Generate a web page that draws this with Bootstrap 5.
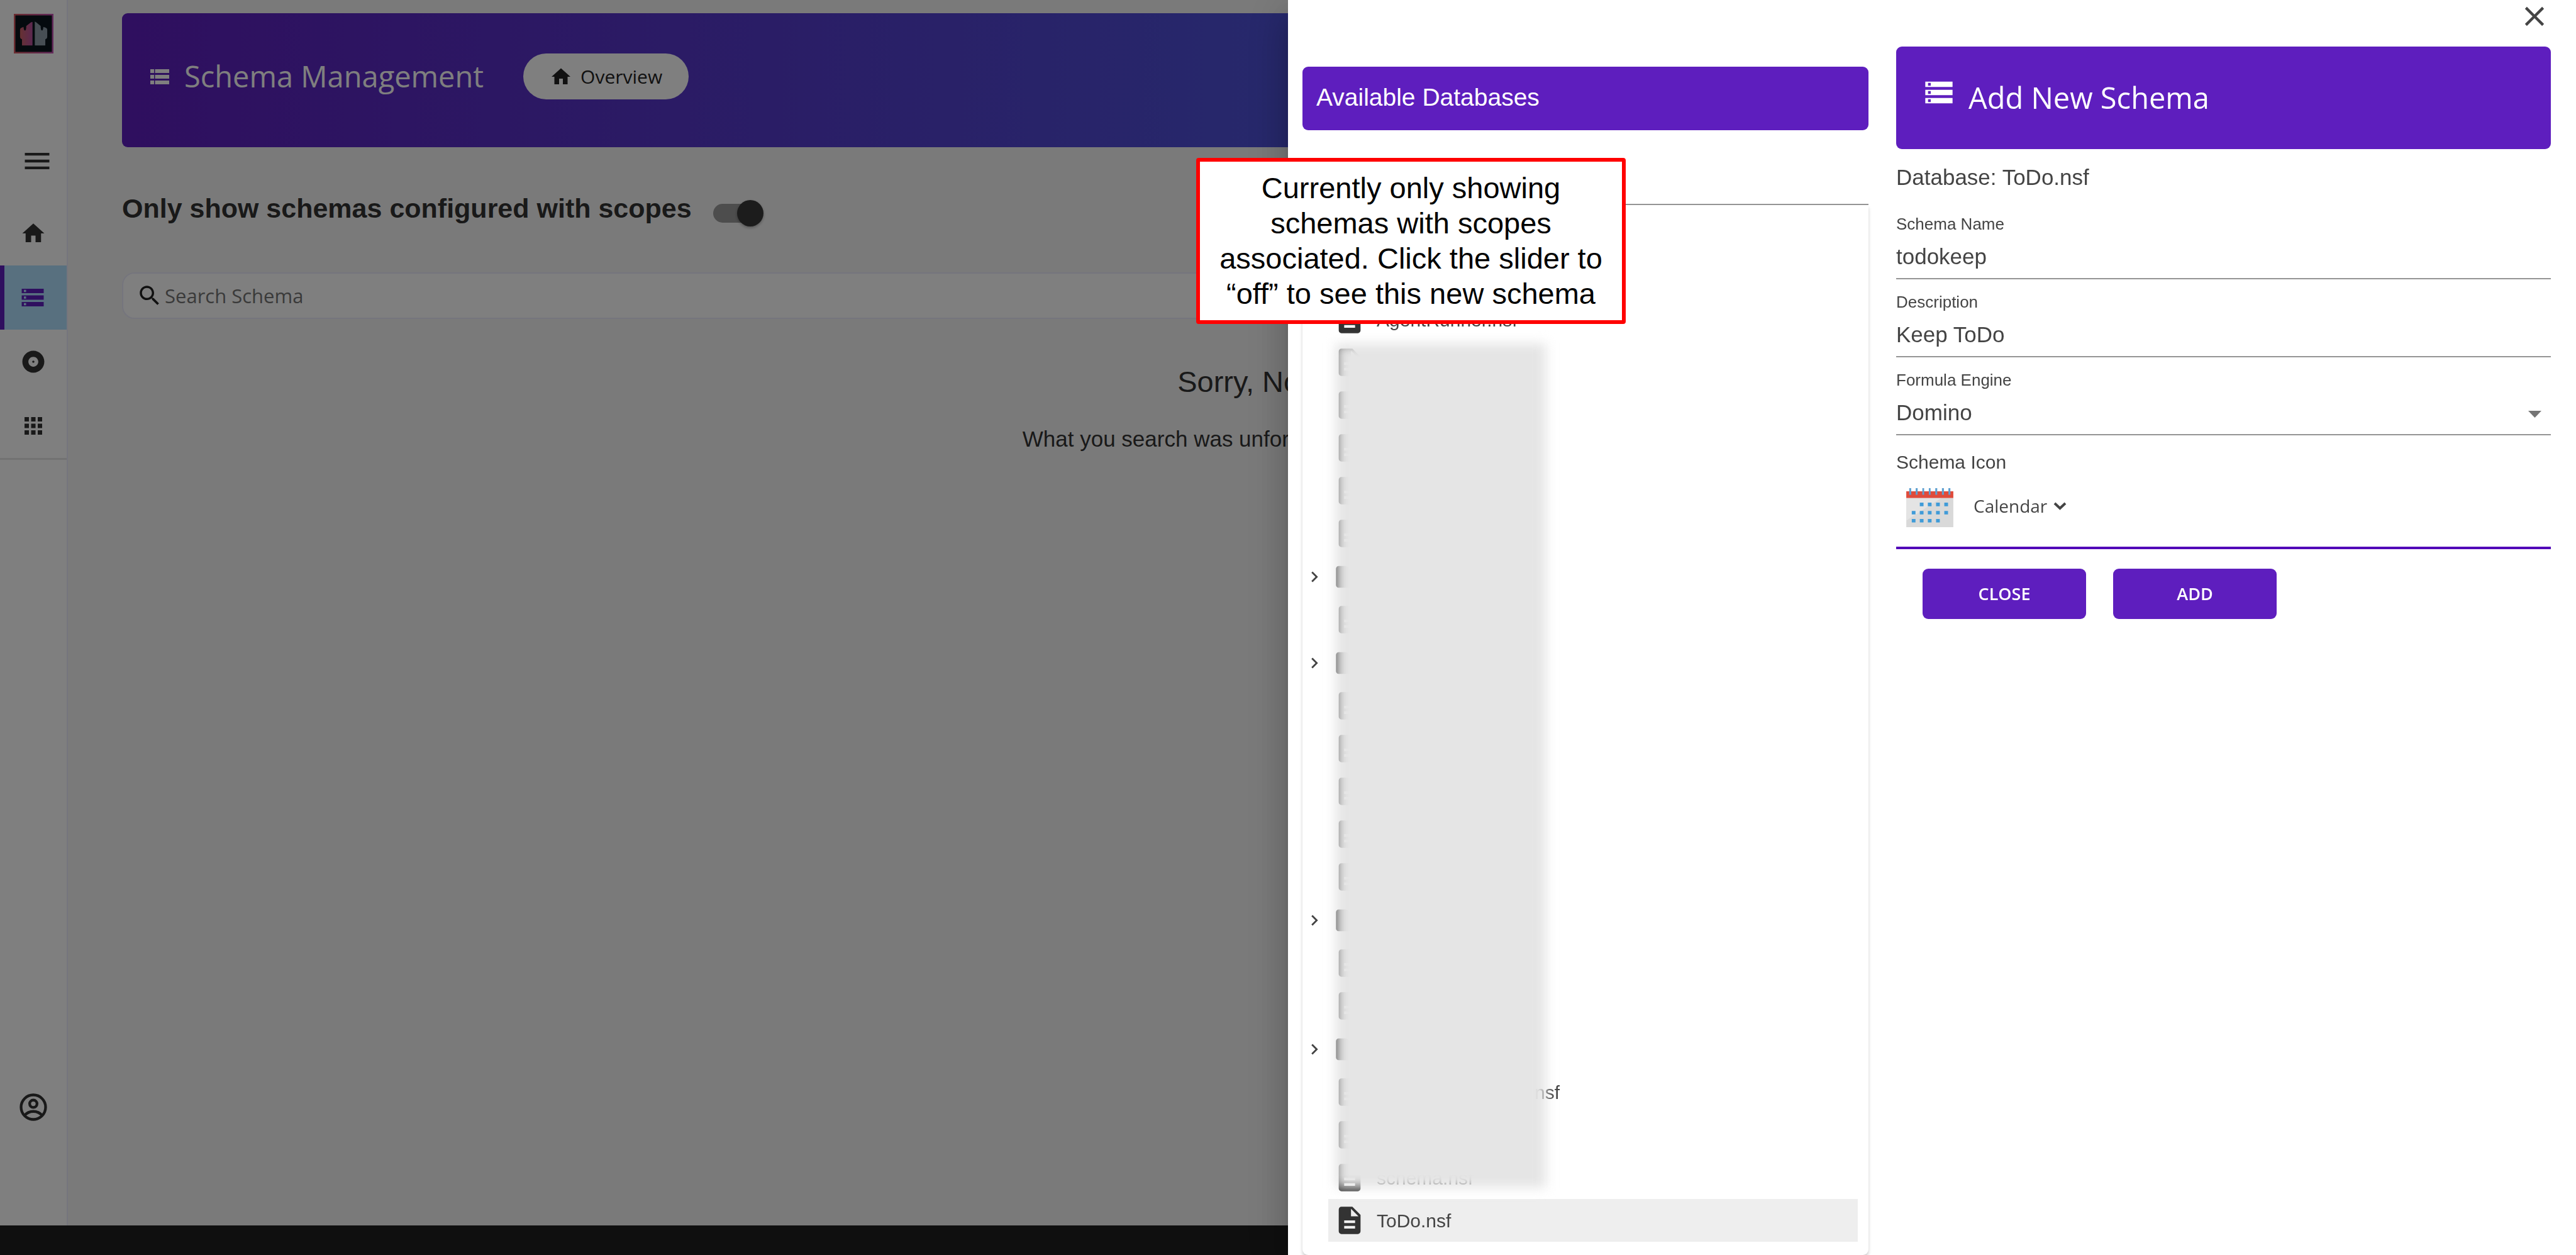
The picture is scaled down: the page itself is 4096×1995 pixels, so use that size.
<!DOCTYPE html>
<html lang="en">
<head>
<meta charset="utf-8">
<meta name="viewport" content="width=device-width, initial-scale=1">
<title>Schema Management</title>
<link href="https://cdn.jsdelivr.net/npm/bootstrap@5.3.0/dist/css/bootstrap.min.css" rel="stylesheet">
<style>
  :root { --brand: #5e1ebe; --ink: #333; --edge: #eaeafa; }
  body { font-family: "Liberation Sans", Arial, sans-serif; font-size: 35px; color: var(--ink); background: #f5f5f5; }
  svg { display: block; flex: none; fill: currentColor; }
  .humanist { font-family: "Open Sans", sans-serif; }
  .i36 { width: 36px; height: 36px; }
  .i42 { width: 42px; height: 42px; }
  .i52 { width: 52px; height: 52px; }

  /* side rail */
  .rail { width: 108px; background: #fff; border-right: 2px solid var(--edge); }
  .rail-logo { width: 63px; height: 63px; margin: 22px 0 0 22px; }
  .rail-toggle { margin: 145px 0 38px 33px; color: #222; }
  .rail-nav { border-bottom: 3px solid #e4e4e4; }
  .rail-nav a { height: 102px; color: var(--ink); padding-right: 1px; }
  .rail-nav a.active { background: #b0e0ff; color: var(--brand); border-left: 7px solid var(--brand); padding-right: 10px; }
  .rail-user { margin: auto 0 162px 27px; color: #222; }

  /* page */
  .page { padding: 21px 92px 0 86px; min-width: 0; }
  .banner { border-radius: 9px; color: #fff; padding: 64px 42px 76px; background: linear-gradient(90deg, #5e1ebe, #3c88f4); }
  .banner h1 { font-size: 47px; line-height: 73px; margin: 0 63px 0 21px; font-weight: 400; }
  .pill { background: #fff; color: #222; font-size: 30px; line-height: 73px; border-radius: 37px; padding: 0 42px; gap: 13px; }
  .filter { margin-top: 67px; gap: 34px; }
  .filter label { font-size: 43px; line-height: 60px; }
  .scope-switch { appearance: none; position: relative; width: 74px; height: 30px; border-radius: 15px; background: #9a9a9a; margin: 16px 0 0; }
  .scope-switch::before { content: ""; position: absolute; width: 42px; height: 42px; right: -6px; top: -6px; border-radius: 50%; background: #383838; box-shadow: 0 2px 4px rgba(0,0,0,.3); }
  .search-bar { margin-top: 72px; height: 74px; background: #fff; border: 2px solid var(--edge); border-radius: 20px; padding: 0 21px; gap: 3px; color: #222; }
  .search-bar input { border: 0; background: none; font-size: 31px; padding: 0; }
  .search-bar input::placeholder { color: #757575; opacity: 1; }
  .no-result h2 { font-size: 47px; line-height: 60px; margin: 70px 0 36px; font-weight: 400; }
  .no-result p { line-height: 50px; margin: 0; }
  .base-bar { height: 47px; background: #1e1e1e; }

  /* drawer */
  .offcanvas.drawer { width: 50%; border: 0; background: #fff; color: #444; padding: 0 40px 0 23px; overflow: hidden; transition: none; outline: 0;
    box-shadow: 0 17px 22px -11px rgba(0,0,0,.2), 0 35px 52px 4px rgba(0,0,0,.14), 0 13px 65px 11px rgba(0,0,0,.12); }
  .bare { border: 0; background: none; padding: 0; color: inherit; }
  .drawer-cols { gap: 44px; min-height: 0; }
  .db-col { flex: 900 1 0; margin-top: 54px; }
  .form-col { flex: 1041 1 0; margin-top: 22px; }
  .db-title { background: var(--brand); color: #fff; border-radius: 9px; font-size: 39px; line-height: 49px; font-weight: 400; padding: 24px 22px 28px; margin: 0; }
  .line-field { width: 100%; height: 73px; border: 0; border-bottom: 2px solid #949494; border-radius: 0; background: none; color: #444; font-size: 35px; padding: 3px 0 0; }
  .db-search { margin-top: 46px; }
  .tree { position: relative; margin: 0; padding: 148px 17px 0 2px; list-style: none; border-radius: 0 0 9px 9px; box-shadow: 0 4px 5px rgba(0,0,0,.2); }
  .tree li { display: flex; gap: 5px; height: 68px; font-size: 30px; }
  .tree li.folder { height: 69px; }
  .twist { width: 34px; display: flex; align-items: center; }
  .leaf { flex: 1; display: flex; align-items: center; gap: 17px; padding-left: 8px; text-align: left; }
  .leaf svg { color: #333; }
  .leaf.active { background: #eee; }
  .tail { width: 291px; text-align: right; }
  .tree li.redacted { position: absolute; left: 53px; top: 220px; width: 334px; height: 1342px; background: #e5e5e5; filter: blur(9px); }

  .form-title { height: 163px; background: var(--brand); color: #fff; border-radius: 9px; padding: 47px 42px 0; gap: 21px; }
  .form-title h2 { font-size: 47px; line-height: 60px; margin: 4px 0 0; font-weight: 400; }
  .db-name { line-height: 50px; margin: 20px 0 34px; }
  .field-label { display: block; font-size: 26px; line-height: 30px; margin-top: 21px; }
  .select-wrap { position: relative; }
  .select-wrap select { appearance: none; }
  .select-wrap svg { position: absolute; right: 15px; top: 34px; color: #757575; pointer-events: none; }
  .icon-label { font-size: 30px; line-height: 36px; margin: 25px 0 0; }
  .icon-pick { height: 120px; border-bottom: 4px solid #5208b8; padding: 23px 16px 0; align-items: flex-start; }
  .icon-pick button { font-size: 28px; line-height: 56px; gap: 10px; margin-left: 32px; }
  .actions { margin: 31px 42px; gap: 43px; }
  .actions .btn { width: 260px; height: 80px; border-radius: 9px; background: var(--brand); color: #fff; font-size: 27px; font-weight: 600; padding: 0; }

  .callout { position: fixed; z-index: 2000; left: 1902px; top: 251px; width: 683px; height: 264px; border: 6px solid #f00; border-radius: 4px; background: #fff; color: #000; text-align: center; font-size: 47px; line-height: 56px; padding-top: 14px; margin: 0; white-space: nowrap; }
</style>
</head>
<body class="vh-100 overflow-hidden d-flex flex-column">

<svg width="0" height="0" class="position-absolute" aria-hidden="true">
  <defs>
    <symbol id="storage" viewBox="0 0 24 24"><path d="M2 20h20v-4H2v4zm2-3h2v2H4v-2zM2 4v4h20V4H2zm4 3H4V5h2v2zm-4 7h20v-4H2v4zm2-3h2v2H4v-2z"/></symbol>
    <symbol id="rows" viewBox="0 0 24 24"><path d="M2 20h4v-4H2v4zm5 0h15v-4H7v4zM2 4v4h4V4H2zm5 0v4h15V4H7zM2 14h4v-4H2v4zm5 0h15v-4H7v4z"/></symbol>
    <symbol id="home" viewBox="0 0 24 24"><path d="M10 20v-6h4v6h5v-8h3L12 3 2 12h3v8z"/></symbol>
    <symbol id="album" viewBox="0 0 24 24"><path d="M12 2C6.48 2 2 6.48 2 12s4.48 10 10 10 10-4.48 10-10S17.52 2 12 2zm0 14.5c-2.49 0-4.500-2.010-4.500-4.500S9.510 7.500 12 7.500s4.500 2.010 4.500 4.500-2.010 4.500-4.500 4.500zm0-5.500c-.55 0-1 .45-1 1s.45 1 1 1 1-.45 1-1-.45-1-1-1z"/></symbol>
    <symbol id="apps" viewBox="0 0 24 24"><path d="M4 8h4V4H4v4zm6 12h4v-4h-4v4zm-6 0h4v-4H4v4zm0-6h4v-4H4v4zm6 0h4v-4h-4v4zm6-10v4h4V4h-4zm-6 4h4V4h-4v4zm6 6h4v-4h-4v4zm0 6h4v-4h-4v4z"/></symbol>
    <symbol id="menu" viewBox="0 0 24 24"><path d="M3 18h18v-2H3v2zm0-5h18v-2H3v2zm0-7v2h18V6H3z"/></symbol>
    <symbol id="search" viewBox="0 0 24 24"><path d="M15.500 14h-.79l-.28-.27C15.410 12.590 16 11.110 16 9.500 16 5.910 13.090 3 9.500 3S3 5.910 3 9.500 5.910 16 9.500 16c1.610 0 3.090-.59 4.230-1.570l.27.28v.79l5 4.990L20.490 19l-4.990-5zm-6 0C7.010 14 5 11.990 5 9.500S7.010 5 9.500 5 14 7.010 14 9.500 11.990 14 9.500 14z"/></symbol>
    <symbol id="close" viewBox="0 0 24 24"><path d="M19 6.410L17.590 5 12 10.590 6.410 5 5 6.410 10.590 12 5 17.590 6.410 19 12 13.410 17.590 19 19 17.590 13.410 12z"/></symbol>
    <symbol id="doc" viewBox="0 0 24 24"><path d="M14 2H6c-1.100 0-1.990.9-1.990 2L4 20c0 1.100.89 2 1.990 2H18c1.100 0 2-.9 2-2V8l-6-6zm2 16H8v-2h8v2zm0-4H8v-2h8v2zm-3-5V3.500L18.500 9H13z"/></symbol>
    <symbol id="folder" viewBox="0 0 24 24"><path d="M10 4H4c-1.100 0-2 .9-2 2v12c0 1.100.9 2 2 2h16c1.100 0 2-.9 2-2V8c0-1.100-.9-2-2-2h-8l-2-2z"/></symbol>
    <symbol id="next" viewBox="0 0 24 24"><path d="M10 6L8.590 7.410 13.170 12l-4.580 4.590L10 18l6-6z"/></symbol>
    <symbol id="user" viewBox="0 0 24 24"><g fill="none" stroke="currentColor" stroke-width="2"><circle cx="12" cy="12" r="9"/><circle cx="12" cy="9.500" r="2.700"/><path d="M5.500 18c1.800-2 4-2.900 6.500-2.900s4.700.9 6.500 2.900"/></g></symbol>
  </defs>
</svg>

<div class="d-flex flex-grow-1">
  <aside class="rail d-flex flex-column flex-shrink-0">
    <a href="#" class="rail-logo" aria-label="Home">
      <svg width="63" height="63" viewBox="0 0 204 204">
        <defs><linearGradient id="lg"><stop offset="0" stop-color="#d85a62"/><stop offset="1" stop-color="#c552b4"/></linearGradient>
        <linearGradient id="hat"><stop offset="0" stop-color="#cc6265"/><stop offset="1" stop-color="#b850a0"/></linearGradient></defs>
        <rect x="4" y="4" width="196" height="196" fill="#0a141c" stroke="url(#lg)" stroke-width="8"/>
        <path fill="url(#hat)" d="M96 42v121H42v-32q-10-4-10-14V82q0-8 8-11l10-4q1 18 8 19 6-2 6-24l22-17q5-4 10-3z"/>
        <path fill="#8e9ca8" d="M108 40v123h54v-32q10-4 10-14V82q0-8-8-11l-12-4q-1 18-7 19-7-2-7-24l-18-14q-6-6-12-8z"/>
      </svg>
    </a>
    <button class="bare rail-toggle align-self-start" aria-label="Menu"><svg class="i52"><use href="#menu"/></svg></button>
    <nav class="rail-nav d-flex flex-column">
      <a href="#" class="d-flex align-items-center justify-content-center" aria-label="Overview"><svg class="i42"><use href="#home"/></svg></a>
      <a href="#" class="active d-flex align-items-center justify-content-center" aria-label="Schemas"><svg class="i42"><use href="#storage"/></svg></a>
      <a href="#" class="d-flex align-items-center justify-content-center" aria-label="Scopes"><svg class="i42"><use href="#album"/></svg></a>
      <a href="#" class="d-flex align-items-center justify-content-center" aria-label="Applications"><svg class="i42"><use href="#apps"/></svg></a>
    </nav>
    <button class="bare rail-user align-self-start" aria-label="Account"><svg class="i52"><use href="#user"/></svg></button>
  </aside>

  <main class="page flex-grow-1">
    <header class="banner humanist d-flex align-items-center">
      <svg class="i36"><use href="#rows"/></svg>
      <h1>Schema Management</h1>
      <a href="#" class="pill d-flex align-items-center text-decoration-none"><svg class="i36"><use href="#home"/></svg>Overview</a>
    </header>
    <div class="filter d-flex align-items-center">
      <label for="scoped" class="fw-bold">Only show schemas configured with scopes</label>
      <input type="checkbox" id="scoped" class="scope-switch" role="switch" checked>
    </div>
    <div class="search-bar humanist d-flex align-items-center">
      <svg class="i42"><use href="#search"/></svg>
      <input type="text" class="flex-grow-1" placeholder="Search Schema" aria-label="Search Schema">
    </div>
    <section class="no-result text-center">
      <h2>Sorry, No result found</h2>
      <p>What you search was unfortunately not found or doesn't exist</p>
    </section>
  </main>
</div>
<footer class="base-bar flex-shrink-0"></footer>

<div class="offcanvas-backdrop show"></div>

<section class="offcanvas offcanvas-end show drawer" data-bs-backdrop="false" data-bs-scroll="true" aria-label="Add New Schema">
  <div class="d-flex justify-content-end">
    <button class="bare" aria-label="Close panel"><svg class="i52"><use href="#close"/></svg></button>
  </div>
  <div class="drawer-cols d-flex flex-grow-1">
    <div class="db-col d-flex flex-column">
      <h2 class="db-title">Available Databases</h2>
      <input type="text" class="line-field db-search flex-shrink-0" aria-label="Search databases">
      <ul class="tree flex-grow-1" id="tree">
        <li><span class="twist"></span><button class="bare leaf"><svg class="i52"><use href="#doc"/></svg>AgentRunner.nsf</button></li>
        <li><span class="twist"></span><span class="leaf"><svg class="i52"><use href="#doc"/></svg></span></li>
        <li><span class="twist"></span><span class="leaf"><svg class="i52"><use href="#doc"/></svg></span></li>
        <li><span class="twist"></span><span class="leaf"><svg class="i52"><use href="#doc"/></svg></span></li>
        <li><span class="twist"></span><span class="leaf"><svg class="i52"><use href="#doc"/></svg></span></li>
        <li><span class="twist"></span><span class="leaf"><svg class="i52"><use href="#doc"/></svg></span></li>
        <li class="folder"><button class="bare twist" aria-label="Expand"><svg width="34" height="34"><use href="#next"/></svg></button><span class="leaf"><svg class="i52"><use href="#folder"/></svg></span></li>
        <li><span class="twist"></span><span class="leaf"><svg class="i52"><use href="#doc"/></svg></span></li>
        <li class="folder"><button class="bare twist" aria-label="Expand"><svg width="34" height="34"><use href="#next"/></svg></button><span class="leaf"><svg class="i52"><use href="#folder"/></svg></span></li>
        <li><span class="twist"></span><span class="leaf"><svg class="i52"><use href="#doc"/></svg></span></li>
        <li><span class="twist"></span><span class="leaf"><svg class="i52"><use href="#doc"/></svg></span></li>
        <li><span class="twist"></span><span class="leaf"><svg class="i52"><use href="#doc"/></svg></span></li>
        <li><span class="twist"></span><span class="leaf"><svg class="i52"><use href="#doc"/></svg></span></li>
        <li><span class="twist"></span><span class="leaf"><svg class="i52"><use href="#doc"/></svg></span></li>
        <li class="folder"><button class="bare twist" aria-label="Expand"><svg width="34" height="34"><use href="#next"/></svg></button><span class="leaf"><svg class="i52"><use href="#folder"/></svg></span></li>
        <li><span class="twist"></span><span class="leaf"><svg class="i52"><use href="#doc"/></svg></span></li>
        <li><span class="twist"></span><span class="leaf"><svg class="i52"><use href="#doc"/></svg></span></li>
        <li class="folder"><button class="bare twist" aria-label="Expand"><svg width="34" height="34"><use href="#next"/></svg></button><span class="leaf"><svg class="i52"><use href="#folder"/></svg></span></li>
        <li><span class="twist"></span><button class="bare leaf"><svg class="i52"><use href="#doc"/></svg><span class="tail">nsf</span></button></li>
        <li><span class="twist"></span><span class="leaf"><svg class="i52"><use href="#doc"/></svg></span></li>
        <li><span class="twist"></span><button class="bare leaf"><svg class="i52"><use href="#doc"/></svg>schema.nsf</button></li>
        <li><span class="twist"></span><button class="bare leaf active"><svg class="i52"><use href="#doc"/></svg>ToDo.nsf</button></li>
        <li class="redacted" aria-hidden="true"></li>
      </ul>
    </div>

    <form class="form-col">
      <header class="form-title humanist d-flex align-items-start">
        <svg class="i52"><use href="#storage"/></svg>
        <h2>Add New Schema</h2>
      </header>
      <p class="db-name">Database: ToDo.nsf</p>
      <label class="field-label" for="sname">Schema Name</label>
      <input class="line-field" id="sname" type="text" value="todokeep">
      <label class="field-label" for="sdesc">Description</label>
      <input class="line-field" id="sdesc" type="text" value="Keep ToDo">
      <label class="field-label" for="sengine">Formula Engine</label>
      <div class="select-wrap">
        <select class="line-field" id="sengine"><option>Domino</option></select>
        <svg width="21" height="11" viewBox="0 0 21 11"><path d="M0 0h21L10.500 11z"/></svg>
      </div>
      <p class="icon-label" id="icon-label">Schema Icon</p>
      <div class="icon-pick d-flex">
        <svg width="75" height="62" viewBox="0 0 240 199">
          <rect y="16" width="240" height="183" fill="#d9d9d9"/>
          <path d="M0 50h180L0 165z" fill="#e4e4e4"/>
          <rect y="16" width="240" height="34" fill="#e04b3b"/>
          <g fill="#5d9fd0"><path d="M15 0h10v34H15zM48 0h10v34H48zM82 0h9v34h-9zM115 0h9v34h-9zM148 0h10v34h-10zM182 0h10v34h-10zM215 0h10v34h-10z"/></g>
          <path fill="#3f9bd8" d="M69 74h19v18H69zM110 74h19v18h-19zM152 74h19v18h-19zM194 74h19v18h-19zM28 116h19v18H28zM69 116h19v18H69zM110 116h19v18h-19zM152 116h19v18h-19zM194 116h19v18h-19zM28 157h19v18H28zM69 157h19v18H69zM110 157h19v18h-19zM152 157h19v18h-19z"/>
        </svg>
        <button type="button" class="bare humanist d-flex align-items-center" aria-describedby="icon-label">Calendar
          <svg width="21" height="14" viewBox="0 0 21 14"><path d="M2 3l8.500 8L19 3" fill="none" stroke="currentColor" stroke-width="4"/></svg>
        </button>
      </div>
      <div class="actions humanist d-flex">
        <button type="button" class="btn">CLOSE</button>
        <button type="button" class="btn">ADD</button>
      </div>
    </form>
  </div>
</section>

<p class="callout">Currently only showing<br>schemas with scopes<br>associated. Click the slider to<br>“off” to see this new schema</p>

<script src="https://cdn.jsdelivr.net/npm/bootstrap@5.3.0/dist/js/bootstrap.bundle.min.js"></script>
</body>
</html>
